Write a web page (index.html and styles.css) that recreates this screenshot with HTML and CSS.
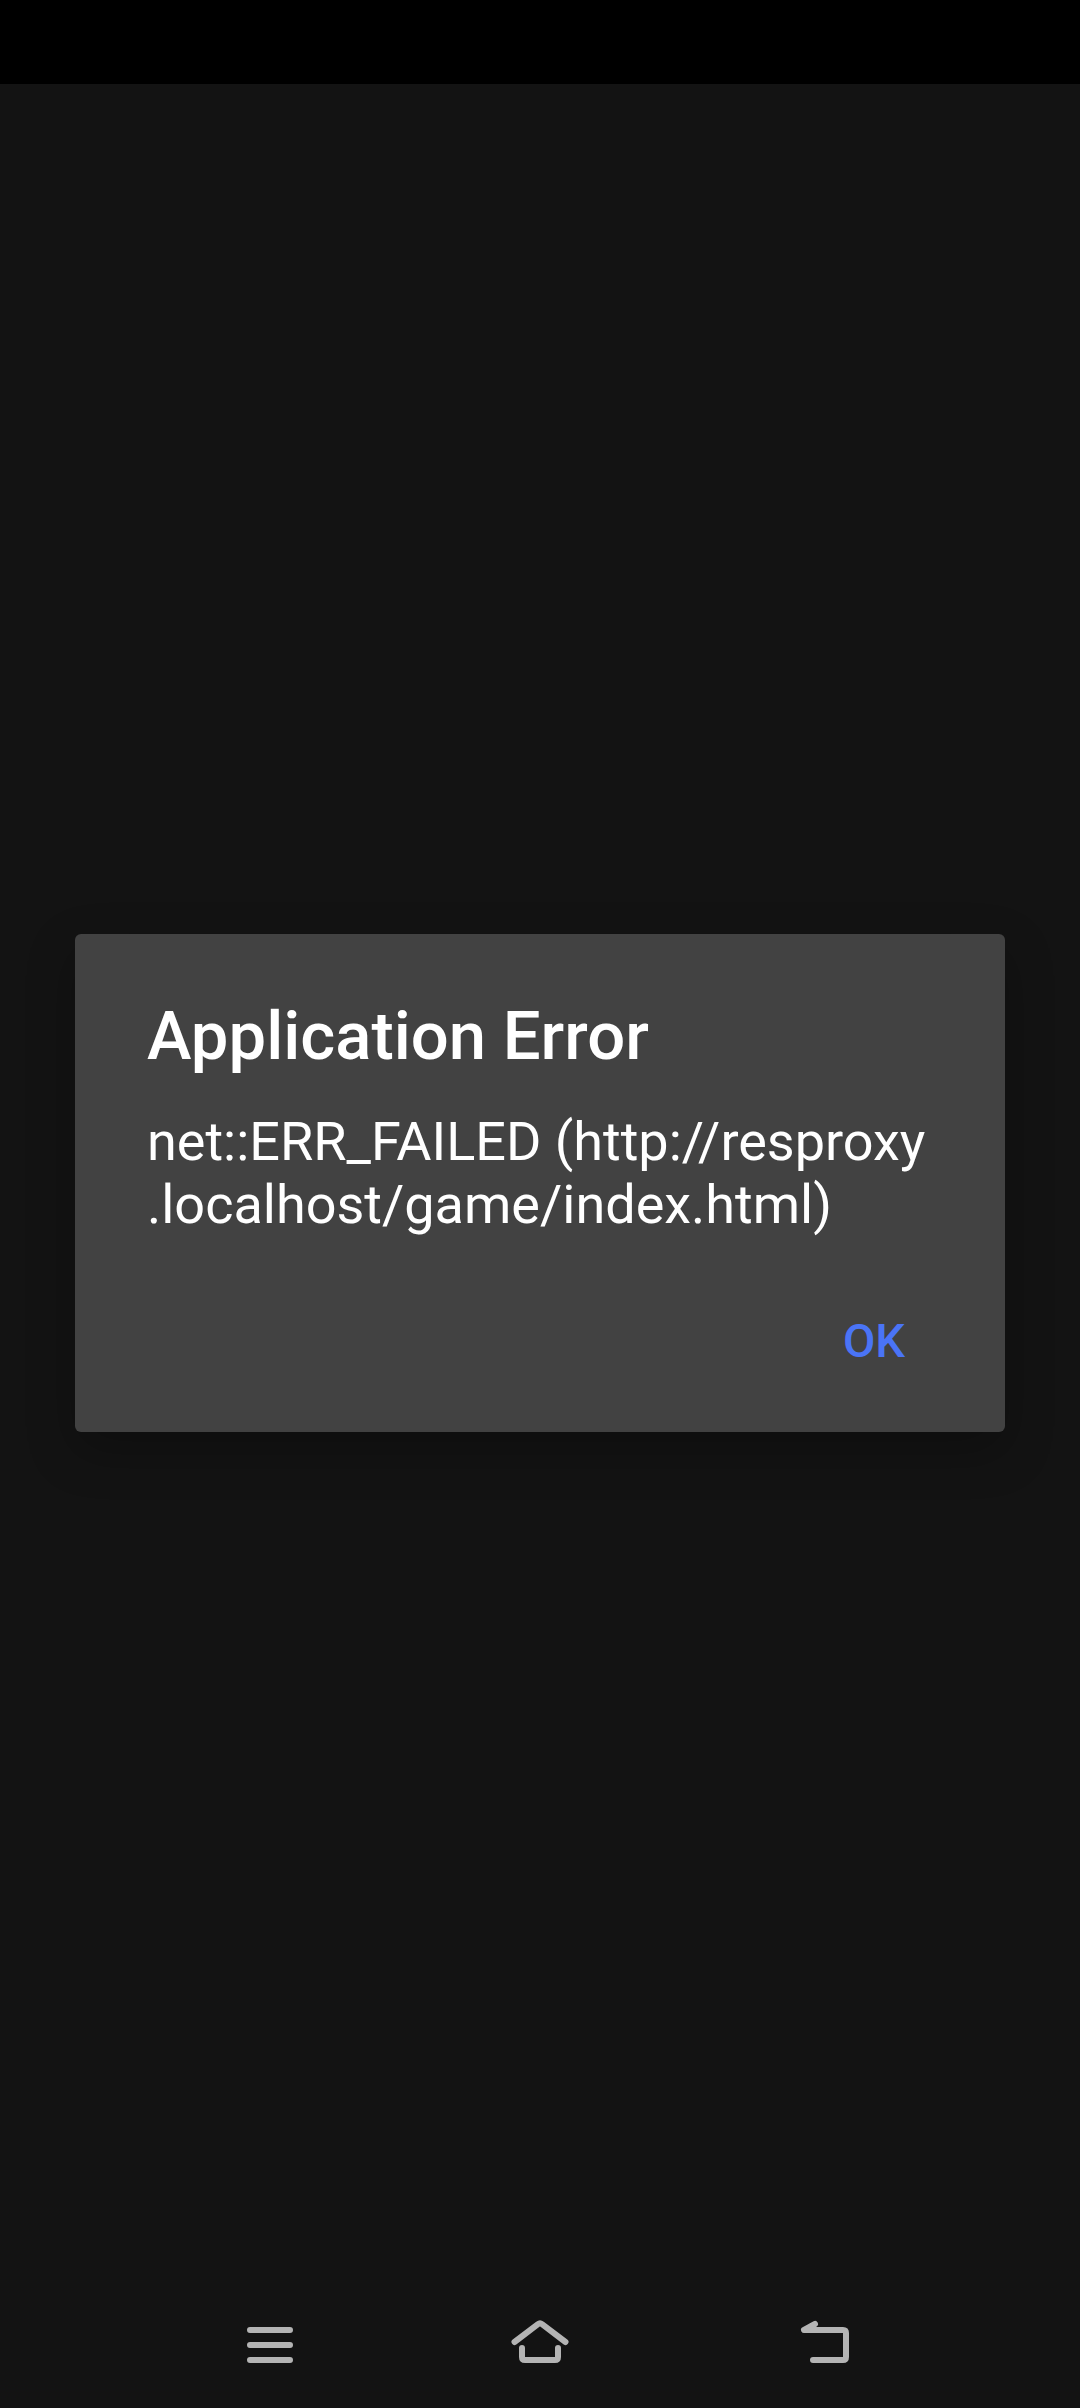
FILE: index.html
```html
<!DOCTYPE html>
<html lang="en">
<head>
<meta charset="utf-8">
<meta name="viewport" content="width=device-width, initial-scale=1">
<title>Application Error</title>
<link rel="stylesheet" href="styles.css">
</head>
<body>
<div class="screen">
  <div class="status-bar"></div>
  <main class="stage">
    <section class="dialog" role="alertdialog" aria-labelledby="dialog-title" aria-describedby="dialog-message">
      <h1 class="dialog-title" id="dialog-title">Application Error</h1>
      <p class="dialog-message" id="dialog-message">net::ERR_FAILED (http://resproxy<wbr>.localhost/game/index.html)</p>
      <div class="dialog-actions">
        <button class="dialog-button" type="button">OK</button>
      </div>
    </section>
  </main>
  <nav class="nav-bar" aria-label="System navigation">
    <button class="nav-button" type="button" aria-label="Recent apps">
      <svg class="nav-icon" viewBox="0 0 90 90" aria-hidden="true"><path d="M25 30H65M25 45H65M25 60H65"/></svg>
    </button>
    <button class="nav-button" type="button" aria-label="Home">
      <svg class="nav-icon" viewBox="0 0 90 90" aria-hidden="true"><path d="M19.5 42L43 24.2Q45 22.6 47 24.2L70.5 42M27 48V57Q27 60 30 60H60Q63 60 63 57V48"/></svg>
    </button>
    <button class="nav-button" type="button" aria-label="Back">
      <svg class="nav-icon" viewBox="0 0 90 90" aria-hidden="true"><path d="M50 24L39 30H78Q81 30 81 33V57Q81 60 78 60H48"/></svg>
    </button>
  </nav>
</div>
</body>
</html>
```

FILE: styles.css
```css
* {
  box-sizing: border-box;
}

body {
  margin: 0;
  background: #131313;
  color: #fff;
  font-family: Roboto, "Liberation Sans", sans-serif;
}

button {
  border: 0;
  background: none;
  font: inherit;
  cursor: pointer;
}

.screen {
  display: flex;
  flex-direction: column;
  min-height: 100vh;
}

.status-bar {
  height: 84px;
  background: #000;
}

.stage {
  display: flex;
  flex: 1;
  align-items: center;
  padding: 0 75px;
}

.dialog {
  flex: 1;
  padding: 60px 72px 48px;
  border-radius: 6px;
  background: #424242;
  box-shadow: 0 18px 48px rgba(0, 0, 0, 0.25);
}

.dialog-title {
  margin: 0;
  font-size: 67px;
  font-weight: 500;
  line-height: 84px;
}

.dialog-message {
  margin: 32px 0 0;
  font-size: 54px;
  line-height: 63px;
}

.dialog-actions {
  display: flex;
  justify-content: flex-end;
  margin-top: 60px;
}

.dialog-button {
  height: 88px;
  padding: 0 28px;
  color: #4a74f6;
  font-size: 47px;
  font-weight: 500;
}

.nav-bar {
  display: grid;
  grid-template-columns: repeat(3, 1fr);
  height: 126px;
  padding: 0 12.5%;
}

.nav-button {
  display: flex;
  align-items: center;
  justify-content: center;
  padding: 0;
}

.nav-icon {
  width: 90px;
  height: 90px;
  fill: none;
  stroke: #b4b4b4;
  stroke-width: 6;
  stroke-linecap: round;
  stroke-linejoin: round;
}
```
